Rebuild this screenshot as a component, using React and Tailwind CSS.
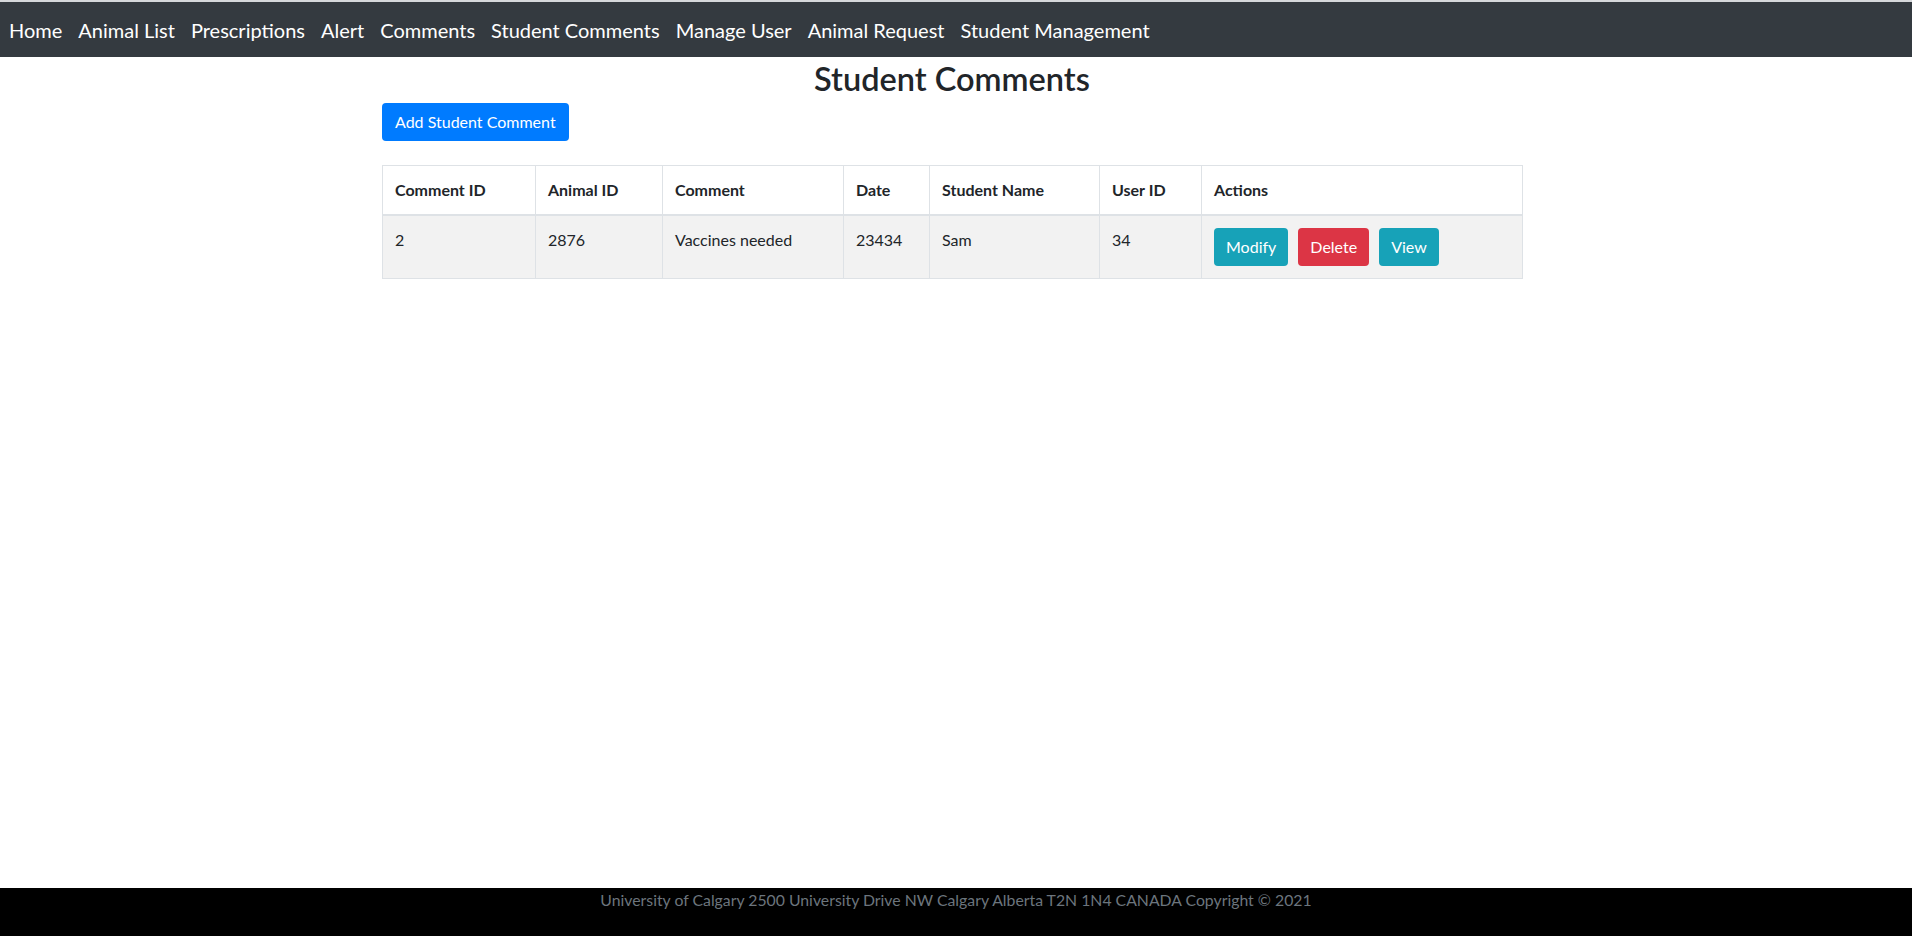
import React from 'react'

const navLinks = [
  'Home',
  'Animal List',
  'Prescriptions',
  'Alert',
  'Comments',
  'Student Comments',
  'Manage User',
  'Animal Request',
  'Student Management',
]

const comments = [
  { id: 2, animalId: 2876, comment: 'Vaccines needed', date: 23434, student: 'Sam', userId: 34 },
]

export default function App() {
  return (
    <div className="flex h-screen flex-col bg-white text-[#212529] font-['Lato','Open_Sans',sans-serif]">
      {/* Navbar */}
      <nav className="flex h-[57px] shrink-0 items-center border-t-2 border-[#d6d8db] bg-[#343a40] pl-[1px]">
        {navLinks.map((label) => (
          <a key={label} href="#" className="px-2 text-[20px] leading-[30px] text-white">
            {label}
          </a>
        ))}
      </nav>

      {/* Main */}
      <main className="flex-1 pr-2">
        <div className="mx-auto w-[1140px]">
          <h2 className="mt-[3px] mb-[5px] text-center text-[32.5px] font-semibold leading-[38px]">Student Comments</h2>
          <button className="h-[38px] rounded-[4px] bg-[#007bff] px-[13px] text-[16px] text-white">
            Add Student Comment
          </button>

          <table className="mt-6 w-[1140px] table-fixed border-collapse border border-[#dee2e6] text-[16px]">
            <colgroup>
              <col className="w-[153px]" />
              <col className="w-[127px]" />
              <col className="w-[181px]" />
              <col className="w-[86px]" />
              <col className="w-[170px]" />
              <col className="w-[102px]" />
              <col className="w-[321px]" />
            </colgroup>
            <thead>
              <tr className="border-b-2 border-[#dee2e6]">
                {['Comment ID', 'Animal ID', 'Comment', 'Date', 'Student Name', 'User ID', 'Actions'].map((h) => (
                  <th key={h} className="border border-b-2 border-[#dee2e6] px-3 py-3 text-left font-bold leading-6">
                    {h}
                  </th>
                ))}
              </tr>
            </thead>
            <tbody>
              {comments.map((c) => (
                <tr key={c.id} className="bg-[#f2f2f2]">
                  <td className="border border-[#dee2e6] px-3 py-3 align-top leading-6">{c.id}</td>
                  <td className="border border-[#dee2e6] px-3 py-3 align-top leading-6">{c.animalId}</td>
                  <td className="border border-[#dee2e6] px-3 py-3 align-top leading-6">{c.comment}</td>
                  <td className="border border-[#dee2e6] px-3 py-3 align-top leading-6">{c.date}</td>
                  <td className="border border-[#dee2e6] px-3 py-3 align-top leading-6">{c.student}</td>
                  <td className="border border-[#dee2e6] px-3 py-3 align-top leading-6">{c.userId}</td>
                  <td className="border border-[#dee2e6] px-3 py-3 align-top leading-6">
                    <div className="flex gap-[10px]">
                      <button className="h-[38px] rounded-[4px] bg-[#17a2b8] px-3 text-white">Modify</button>
                      <button className="h-[38px] rounded-[4px] bg-[#dc3545] px-3 text-white">Delete</button>
                      <button className="h-[38px] rounded-[4px] bg-[#17a2b8] px-3 text-white">View</button>
                    </div>
                  </td>
                </tr>
              ))}
            </tbody>
          </table>
        </div>
      </main>

      {/* Footer */}
      <footer className="h-[48px] shrink-0 bg-black text-center text-[15.8px] leading-6 text-[#6c757d]">
        University of Calgary 2500 University Drive NW Calgary Alberta T2N 1N4 CANADA Copyright © 2021
      </footer>
    </div>
  )
}
